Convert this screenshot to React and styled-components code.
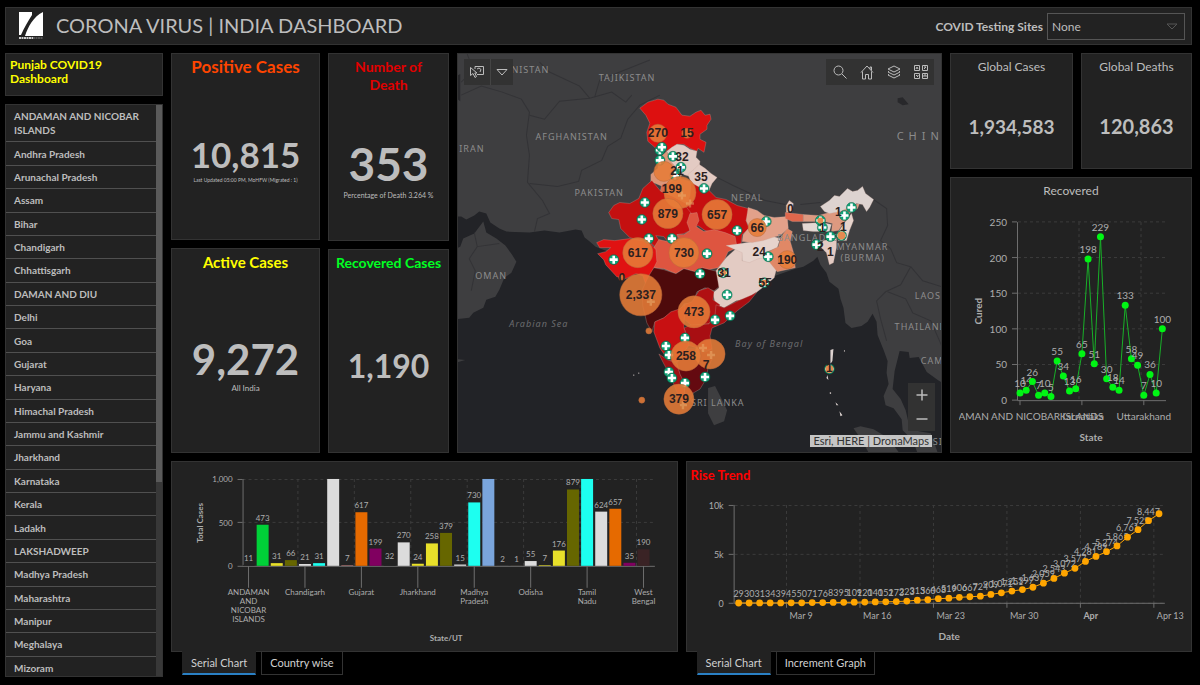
import React, { useState } from "react";
import styled, { createGlobalStyle } from "styled-components";

const GlobalStyle = createGlobalStyle`
    * {
        box-sizing: border-box;
    }
    body {
        margin: 0;
        background: #000;
        color: #bdbdbd;
        font-family: Lato, "Liberation Sans", sans-serif;
    }
    button, select {
        font-family: inherit;
    }
`

const Page = styled.div`
    display: flex;
    flex-direction: column;
    gap: 8px;
    height: 100vh;
    min-height: 600px;
    padding: 7px 8px 8px 5px;
`

const Panel = styled.section`
    background: #222;
    border: 1px solid #333;
    min-width: 0;
    min-height: 0;
    overflow: hidden;
`

const Header = styled.header`
    display: flex;
    align-items: center;
    flex: none;
    height: 38px;
    padding: 0 6px 0 13px;
    background: #222;
    border: 1px solid #333;
`

const Title = styled.h1`
    flex: 1;
    margin: 0 0 2px 13px;
    font-size: 20px;
    font-weight: 400;
    white-space: nowrap;
`

const SiteLabel = styled.label`
    margin-right: 4px;
    font-size: 12px;
    font-weight: 700;
`

const SelectBox = styled.div`
    position: relative;
    width: 138px;

    svg {
        position: absolute;
        top: 10px;
        right: 7px;
        pointer-events: none;
    }
`

const Select = styled.select`
    appearance: none;
    width: 100%;
    height: 27px;
    padding: 0 4px;
    color: #bdbdbd;
    background: #222;
    border: 1px solid #555;
    border-radius: 0;
    font-size: 12px;
`

const Body = styled.main`
    display: grid;
    grid-template-columns: 158fr 1021fr;
    gap: 8px;
    flex: 1;
    min-height: 0;
`

const Column = styled.div`
    display: flex;
    flex-direction: column;
    gap: 8px;
    min-width: 0;
    min-height: 0;
`

const LinkPanel = styled(Panel)`
    flex: none;
    height: 43px;
    padding: 4px;
`

const PunjabLink = styled.a`
    display: block;
    color: #ff0;
    font-size: 12px;
    font-weight: 700;
    line-height: 14px;
    text-decoration: none;
`

const ListPanel = styled(Panel)`
    display: flex;
    flex: 1;
`

const ListScroll = styled.div`
    flex: 1;
    overflow: auto;
    scrollbar-width: none;
`

const StateList = styled.ul`
    display: flex;
    flex-direction: column;
    height: calc(100% + 4px);
    margin: 0;
    padding: 0;
    list-style: none;
`

const StateRow = styled.li`
    flex: 1 0 auto;
    display: flex;
    align-items: center;
    padding: 4px 8px;
    border-bottom: 1px solid #505050;
    font-size: 10px;
    font-weight: 700;
    line-height: 14px;
`

const ScrollTrack = styled.div`
    width: 6px;
    background: #383838;
`

const ScrollThumb = styled.div`
    height: 66%;
    background: #5a5a5a;
`

const Content = styled.div`
    display: grid;
    grid-template-rows: 399fr 215fr;
    gap: 8px;
    min-width: 0;
    min-height: 0;
`

const TopRow = styled.div`
    display: grid;
    grid-template-columns: 149fr 121fr 485fr 242fr;
    gap: 8px;
    min-height: 0;
`

const BottomRow = styled.div`
    display: grid;
    grid-template-columns: 1fr 1fr;
    gap: 8px;
    min-height: 0;
    padding-bottom: 2px;
`

const GlobalRow = styled.div`
    display: grid;
    grid-template-columns: 123fr 111fr;
    gap: 8px;
    height: 116px;
    flex: none;
`

const MetricPanel = styled(Panel)`
    display: flex;
    flex-direction: column;
    flex: ${props => props.$grow || 1};
    padding: 4px;
    text-align: center;
`

const MetricTitle = styled.h2`
    margin: 0;
    color: ${props => props.$color || '#bdbdbd'};
    font-size: ${props => props.$size || 12}px;
    font-weight: ${props => props.$color ? 700 : 400};
    line-height: 18px;
`

const MetricBody = styled.div`
    display: flex;
    flex-direction: column;
    align-items: center;
    justify-content: center;
    gap: 2px;
    flex: 1;
    padding-top: 12px;
`

const MetricValue = styled.span`
    font-size: ${props => props.$size}px;
    font-weight: 700;
    line-height: 1;
`

const MetricNote = styled.span`
    font-size: ${props => props.$size}px;
    line-height: 12px;
    white-space: nowrap;
`

const ChartPanel = styled(Panel)`
    display: flex;
    flex-direction: column;
    position: relative;
    flex: 1;
`

const ChartTitle = styled.h2`
    margin: 0;
    padding-top: 4px;
    font-size: 12px;
    font-weight: 400;
    line-height: 18px;
    text-align: center;
`

const TrendTitle = styled(ChartTitle)`
    padding-left: 4px;
    color: #f00;
    font-size: 13px;
    font-weight: 700;
    text-align: left;
`

const ChartSvg = styled.svg`
    display: block;
    flex: 1;
    width: 100%;
    min-height: 0;
    fill: #adadad;
    font-size: ${props => props.$size || 9}px;

    .axis {
        stroke: #6e6e6e;
        fill: none;
    }
    .grid {
        stroke: #3c3c3c;
        stroke-dasharray: 3 3;
        fill: none;
    }
    .name {
        font-weight: 700;
        text-anchor: middle;
    }
    .mid {
        text-anchor: middle;
    }
    .end {
        text-anchor: end;
    }
`

const Tabbed = styled.div`
    display: flex;
    flex-direction: column;
    min-width: 0;
    min-height: 0;
`

const Tabs = styled.div`
    display: flex;
    gap: 5px;
    flex: none;
    height: 24px;
    margin-top: -1px;
    padding-left: 11px;
    z-index: 1;
`

const Tab = styled.button`
    height: 24px;
    padding: 0 8px;
    color: #d0d0d0;
    background: ${props => props.$active ? '#222' : '#000'};
    border: 1px solid ${props => props.$active ? '#222' : '#333'};
    border-bottom: ${props => props.$active ? '2px solid #2a80c4' : '1px solid #333'};
    font-size: 11px;
    cursor: pointer;
`

const MapPanel = styled(Panel)`
    position: relative;
    background: #3e3e40;
`

const MapSvg = styled.svg`
    display: block;
    width: 100%;
    height: 100%;

    .place {
        fill: #8c8c8c;
        font: 9px "Noto Sans", sans-serif;
        letter-spacing: 1px;
    }
    .sea {
        fill: #6b6b6e;
        font-style: italic;
    }
    .wide {
        font-size: 11px;
        letter-spacing: 5px;
    }
    .count {
        fill: #2c2020;
        font: bold 12px "Liberation Sans", sans-serif;
        text-anchor: middle;
    }
`

const MapTools = styled.div`
    position: absolute;
    display: flex;
    flex-direction: ${props => props.$column ? 'column' : 'row'};
    background: #323232;
    ${props => props.$place}
`

const MapButton = styled.button`
    display: flex;
    align-items: center;
    justify-content: center;
    width: ${props => props.$width || 27}px;
    height: ${props => props.$height || 26}px;
    padding: 0;
    color: #bcbcbc;
    background: none;
    border: 0;
    border-right: ${props => props.$divider ? '1px solid #444' : '0'};
    cursor: pointer;

    svg {
        fill: none;
        stroke: currentColor;
    }
`

const Attribution = styled.span`
    position: absolute;
    right: 9px;
    bottom: 5px;
    padding: 0 3px;
    color: #333;
    background: rgba(225, 225, 225, 0.85);
    font-size: 11px;
    line-height: 12px;
`

const states = [
    'ANDAMAN AND NICOBAR ISLANDS', 'Andhra Pradesh', 'Arunachal Pradesh', 'Assam', 'Bihar',
    'Chandigarh', 'Chhattisgarh', 'DAMAN AND DIU', 'Delhi', 'Goa', 'Gujarat', 'Haryana',
    'Himachal Pradesh', 'Jammu and Kashmir', 'Jharkhand', 'Karnataka', 'Kerala', 'Ladakh',
    'LAKSHADWEEP', 'Madhya Pradesh', 'Maharashtra', 'Manipur', 'Meghalaya', 'Mizoram'
]

const WHITE = '#dcdcdc', YELLOW = '#e8e02a', OLIVE = '#666600', CYAN = '#1dfff0', ORANGE = '#e66a00', PURPLE = '#800060'

const stateCases = [
    [11, '#222'], [473, '#00d138'], [31, YELLOW], [66, OLIVE], [21, WHITE], [31, CYAN], [1510, WHITE],
    [7, '#b87878'], [617, ORANGE], [199, PURPLE], [32, '#222'], [270, WHITE], [24, YELLOW], [258, YELLOW],
    [379, OLIVE], [15, WHITE], [730, CYAN], [2337, '#7aa5dc'], [2, '#555'], [1, '#a08060'], [55, WHITE],
    [7, YELLOW], [176, YELLOW], [879, OLIVE], [1173, CYAN], [624, WHITE], [657, ORANGE], [35, PURPLE], [190, '#3a2325']
]

const stateTicks = [
    ['ANDAMAN', 'AND', 'NICOBAR', 'ISLANDS'], ['Chandigarh'], ['Gujarat'], ['Jharkhand'],
    ['Madhya', 'Pradesh'], ['Odisha'], ['Tamil', 'Nadu'], ['West', 'Bengal']
]

const cured = [10, 14, 26, 7, 10, 5, 55, 34, 13, 16, 65, 198, 51, 229, 30, 18, 14, 133, 58, 49, 7, 36, 10, 100]

const trend = [
    29, 30, 31, 34, 39, 45, 50, 71, 76, 83, 95, 109, 120, 140, 152, 173, 223, 315, 360, 468, 519,
    606, 667, 724, 909, 1071, 1251, 1397, 1637, 2059, 2543, 3072, 3577, 4281, 4789, 5274, 5865,
    6761, 7529, 8447, 9152
]

// India, drawn state by state
const PALE = '#e3cbc3'
const regions = [
    ['#dd1010', '640,108 644,105 648,102 658,99 664,100 668,104 676,107 682,115 690,116 696,112 701,110 705,115 710,114 711,119 707,125 707,129 700,134 700,139 706,142 704,152 698,148 697,151 690,148 684,144 677,144 668,150 660,152 655,147 648,141 647,132 650,123 646,115'],
    [PALE, '667,151 672,147 677,144 684,145 690,149 697,151 696,157 700,161 699,167 690,176 680,173 672,166'],
    [PALE, '688,174 694,169 699,164 705,168 711,173 717,177 712,183 709,190 700,188 692,184'],
    ['#dc9678', '659,158 667,151 670,160 677,168 682,174 678,182 665,187 651,181 651,174 658,168'],
    ['#d9694c', '662,184 680,178 690,181 692,193 687,205 680,202 672,196 660,192'],
    ['#c41010', '652,180 643,188 639,198 630,203 620,202 614,205 609,212 612,218 619,219 621,228 630,237 641,240 650,241 655,246 660,241 656,235 664,236 667,240 672,245 679,241 677,234 684,233 690,230 690,215 694,210 686,203 673,196 661,191'],
    ['#c60e10', '691,182 700,187 709,190 716,197 726,199 737,205 748,208 749,214 746,220 749,228 742,234 741,243 736,246 731,240 722,234 712,232 705,230 698,225 692,229 688,222 693,215 686,206 690,195'],
    ['#de5540', '659,239 668,241 674,244 680,240 677,234 684,234 690,230 687,222 690,213 697,212 699,220 696,226 704,231 714,229 725,232 735,236 737,247 728,251 724,260 718,267 708,269 702,267 695,271 684,268 676,273 664,268 654,267 652,250'],
    ['#e01212', '597,242 604,239 615,240 630,238 641,240 650,242 656,249 657,261 653,269 651,282 646,284 643,275 636,273 626,278 617,276 606,264 604,259 598,253 606,251 611,247 600,247'],
    ['#4e0a0b', '649,275 654,267 664,269 676,273 684,268 695,271 702,267 714,270 719,271 719,286 714,290 705,287 697,291 693,302 684,303 679,311 671,312 664,317 655,321 652,331 647,322 643,305 642,290'],
    [PALE, '737,247 743,251 742,260 749,260 758,255 768,258 776,269 774,277 766,284 757,291 746,298 736,300 724,307 715,303 713,292 719,287 716,270 726,257'],
    ['#e6d3cc', '726,245 741,243 753,241 763,239 773,236 780,238 777,247 767,251 769,257 758,258 749,262 742,260 742,252 733,248'],
    ['#e2a18a', '748,207 757,210 764,215 774,217 787,216 788,228 780,235 772,237 763,240 752,242 742,241 743,234 749,227 746,220'],
    ['#e08866', '787,228 792,231 790,241 793,251 795,267 786,269 777,271 768,260 768,251 778,246 781,236'],
    [PALE, '786,205 789,200 793,203 792,211 786,212'],
    ['#e0674c', '785,212 794,213 803,214 803,221 792,221 785,218'],
    ['#dd9980', '803,214 818,215 829,212 840,211 848,206 859,203 857,208 849,213 844,221 838,230 831,231 832,223 824,221 803,221'],
    ['#ddd3d0', '820,206 829,200 834,195 839,196 842,193 847,188 852,191 857,190 862,186 865,193 873,199 869,207 866,211 862,204 856,203 848,207 840,211 829,213 824,211'],
    ['#e3d8d4', '802,223 822,222 831,224 829,231 813,231 803,230'],
    ['#e6d3cc', '845,221 851,213 853,220 849,230 846,240 838,240 836,234'],
    [PALE, '823,240 836,238 836,247 833,262 829,264 826,252 820,246'],
    ['#b01012', '699,290 708,287 714,291 713,299 720,304 715,314 709,323 692,325 684,318 684,304 692,301'],
    ['#a80e12', '716,304 724,307 738,300 752,294 757,291 749,301 737,310 724,322 712,327 710,335 712,348 703,350 697,347 688,344 687,335 684,327 691,324 709,323 715,314'],
    ['#c81012', '655,321 664,317 671,311 680,308 685,304 684,327 687,336 689,344 684,352 677,361 668,359 660,347 654,331'],
    ['#a01014', '659,353 668,359 677,362 681,374 685,383 684,402 677,391 671,376 663,361'],
    ['#640a10', '686,348 697,348 705,351 712,348 712,358 708,367 706,378 700,388 693,392 690,400 684,403 685,383 680,373 677,362']
]

const bubbles = [
    [658, 133, 9, '270'], [687, 133, 5, '15'], [664, 171, 10], [680, 192, 16], [668, 213, 15, '879'], [717, 214, 15, '657'],
    [757, 227, 9, '66'], [638, 252, 15, '617'], [684, 252, 15, '730'], [641, 294, 21, '2,337'], [694, 311, 16, '473'],
    [710, 353, 15], [686, 355, 15, '258'], [679, 398, 15, '379'], [787, 259, 9, '190'], [622, 277, 3], [649, 330, 3], [642, 399, 3]
]

const labels = [
    [682, 157, '32'], [677, 171, '21'], [701, 177, '35'], [672, 189, '199'], [790, 208, '0'], [838, 211, '1'],
    [822, 227, '1'], [843, 226, '1'], [759, 251, '24'], [820, 246, '2'], [830, 251, '1'], [724, 272, '31'],
    [765, 282, '55'], [622, 277, '0'], [706, 364, '7'], [829, 367, '1']
]

const clinics = [
    [660, 150], [662, 147], [660, 160], [673, 156], [681, 167], [675, 175], [704, 188], [645, 202], [642, 219], [649, 238],
    [672, 238], [614, 259], [700, 273], [707, 253], [737, 230], [766, 221], [768, 256], [723, 272], [727, 294],
    [715, 319], [730, 315], [685, 337], [666, 345], [669, 354], [669, 371], [672, 377], [685, 382], [705, 376],
    [820, 220], [822, 227], [844, 215], [851, 207], [830, 236], [841, 235], [816, 244], [829, 368], [764, 282]
]

const places = [
    [512, 73, 'NISTAN'], [599, 81, 'TAJIKISTAN'], [536, 140, 'AFGHANISTAN'], [460, 152, 'IRAN'], [575, 196, 'PAKISTAN'],
    [731, 201, 'NEPAL'], [777, 240, 'BANGLADESH'], [836, 249, 'MYANMAR'], [840, 260, '(BURMA)'], [914, 298, 'LAOS'],
    [894, 329, 'THAILAND'], [920, 363, 'CAM'], [691, 405, 'SRI LANKA'], [476, 278, 'OMAN'], [932, 444, 'SI']
]

const IndiaMap = () => (
    <MapSvg viewBox="458 54 483 397" preserveAspectRatio="xMidYMid slice" role="img" aria-label="Cases by state">
        <path fill="#222327" d="M450 216 L462 216 L467 219 L475 215 L480 211 L487 213 L491 222 L500 228 L507 231 L530 232 L545 230 L560 232 L576 229 L582 230 L585 237 L590 241 L596 246 L606 250 L660 275 L700 330 L720 322 L757 291 L775 275 L795 268 L803 266 L813 260 L817 256 L820 264 L826 272 L829 281 L838 288 L840 298 L843 307 L845 322 L851 327 L861 325 L867 321 L872 313 L876 321 L877 334 L883 349 L887 360 L886 372 L888 383 L883 395 L885 404 L893 407 L901 418 L902 429 L912 439 L920 460 L940 460 L930 432 L918 430 L908 422 L905 409 L900 398 L892 388 L894 370 L899 350 L908 351 L909 357 L918 356 L926 371 L937 379 L945 384 L945 460 L450 460 Z" />
        <path fill="#3e3e40" d="M450 252 L461 246 L464 238 L475 233 L484 221 L487 232 L497 238 L506 245 L512 253 L517 261 L512 272 L505 277 L500 289 L496 296 L487 299 L484 307 L474 312 L470 317 L450 319 Z M708 387 L715 385 L720 395 L727 409 L724 420 L714 424 L708 412 Z M853 427 L860 425 L873 428 L888 437 L901 455 L870 455 L862 440 Z M457 358 L466 359 L459 361 Z" />
        <path fill="#28282b" d="M897 98 L902 97 L908 104 L902 105 L897 102 Z M457 76 L461 74 L461 101 L457 98 Z" />
        <g fill="none" stroke="#333336">
            <path d="M462 95 L482 86 L503 92 L522 99 L530 112 L527 135 L530 155 L528 182 L543 200 L550 213 L538 218 L535 231" />
            <path d="M530 183 L558 186 L579 181 L582 170 L602 160 L608 146 L621 138 L628 119 L640 105 L660 95" />
            <path d="M530 115 L545 119 L560 101 L590 98 L612 92 L626 102 L632 95" />
            <path d="M540 62 L550 72 L580 86 L590 98 M595 97 L600 80 L620 72 L650 60" />
            <path d="M717 177 L733 185 L748 192 L765 200 L785 204 M800 204 L820 202 M873 199 L886 208 L887 225 L880 240 L890 248" />
            <path d="M468 54 L474 70 L462 82 M475 232 L478 246 L470 258 L476 270 L472 290 M478 246 L500 243" />
            <path d="M890 248 L896 262 L910 266 L900 284 L885 291 L876 300 L880 318 L886 340 M910 266 L922 280 L941 286 M887 291 L905 298 L912 312 L930 320 L941 345" />
        </g>
        {regions.map(([color, points], index) => (
            <polygon key={index} points={points} fill={color} stroke="#c9a79f" strokeWidth="0.3" />
        ))}
        <g className="place">
            {places.map(([x, y, name]) => <text key={name} x={x} y={y}>{name}</text>)}
            <text className="wide place" x="896" y="140">CHIN</text>
            <text className="sea place" x="510" y="326">Arabian Sea</text>
            <text className="sea place" x="735" y="346">Bay of Bengal</text>
        </g>
        <g fill="#ddd3d0">
            <path d="M830 349 L833 348 L832 360 L830 363 Z M827 374 L828 379 L826 377 Z M835 401 L838 404 L836 404 Z M839 410 L842 414 L840 415 Z" />
            <circle cx="844" cy="350" r="0.6" /><circle cx="830" cy="392" r="0.8" />
            <circle cx="634" cy="374" r="0.6" /><circle cx="639" cy="372" r="0.6" />
        </g>
        {clinics.map(([x, y], index) => (
            <g key={index}>
                <circle cx={x} cy={y} r="5" fill="#12a277" stroke="#075c42" strokeWidth="0.5" />
                <path d={`M${x - 4} ${y} h8 M${x} ${y - 4} v8`} stroke="#fff" strokeWidth="2.6" />
            </g>
        ))}
        {bubbles.map(([x, y, r], index) => (
            <circle key={index} cx={x} cy={y} r={r} fill="#e67c38" fillOpacity="0.88" stroke="#b8683a" strokeWidth="0.5" />
        ))}
        <g stroke="#e9b070" strokeWidth="2.4" opacity="0.5">
            <path d="M678 195 h8 M682 191 v8 M686 203 h8 M690 199 v8 M699 347 h8 M703 343 v8 M707 354 h8 M711 350 v8 M647 301 h8 M651 297 v8 M680 404 h7 M683 400 v8" />
        </g>
        <g fill="#e58a50">
            <circle cx="723" cy="272" r="3" /><circle cx="764" cy="282" r="3" /><circle cx="820" cy="220" r="3" />
            <circle cx="841" cy="235" r="4" /><circle cx="829" cy="368" r="4" />
        </g>
        <g className="count">
            {bubbles.filter(b => b[3]).map(([x, y, r, text]) => <text key={text} x={x} y={y + 4}>{text}</text>)}
            {labels.map(([x, y, text], index) => <text key={index} x={x} y={y + 4}>{text}</text>)}
        </g>
    </MapSvg>
)

const CasesChart = () => {
    const x = index => 76 + index * 14.13
    const y = value => 104 - Math.min(value, 1000) * 0.087
    return (
        <ChartSvg viewBox="0 0 504 189" $size={8} role="img" aria-label="Total cases by state">
            <path className="grid" d="M70 17.5 H483 M70 60.5 H483" />
            {stateTicks.map((lines, index) => (
                <g key={index}>
                    {index > 0 && <path className="grid" d={`M${x(index * 4 - 0.5)} 17 V104`} />}
                    <path className="axis" d={`M${x(index * 4)} 104 V126`} />
                    {lines.map((line, n) => <text key={line} className="mid" x={x(index * 4)} y={133 + n * 9}>{line}</text>)}
                </g>
            ))}
            <path className="axis" d="M70.5 17 V104.5 M65 17.5 H70 M65 60.5 H70 M65 104.5 H483" />
            <text className="end" x="60" y="20">1,000</text>
            <text className="end" x="60" y="64">500</text>
            <text className="end" x="60" y="107">0</text>
            {stateCases.map(([value, color], index) => (
                <g key={index}>
                    <rect x={x(index) - 6} y={y(value)} width="12" height={104 - y(value)} fill={color} />
                    {value < 1000 && <text className="mid" x={x(index)} y={y(value) - 4}>{value}</text>}
                </g>
            ))}
            <text className="name" transform="translate(30 61) rotate(-90)">Total Cases</text>
            <text className="name" x="274" y="179">State/UT</text>
        </ChartSvg>
    )
}

const RecoveredChart = () => {
    const x = index => 69 + index * 6.19
    const y = value => 199 - value * 0.713
    return (
        <ChartSvg viewBox="0 0 240 250" $size={10} role="img" aria-label="Cured by state">
            {[0, 50, 100, 150, 200, 250].map(value => (
                <g key={value}>
                    {value > 0 && <path className="grid" d={`M67 ${y(value)} H216`} />}
                    <path className="axis" d={`M61 ${y(value)} H66`} />
                    <text className="end" x="56" y={y(value) + 4}>{value}</text>
                </g>
            ))}
            <path className="grid" d="M128 21 V199 M190 21 V199" />
            <path className="axis" d={`M66.5 21 V199.5 H215 M${x(0)} 199 v5 M${x(10)} 199 v5 M${x(20)} 199 v5`} />
            <polyline points={cured.map((value, index) => `${x(index)},${y(value)}`).join(' ')} fill="none" stroke="#18b028" />
            {cured.map((value, index) => (
                <g key={index}>
                    <circle cx={x(index)} cy={y(value)} r="3.5" fill="#00f514" />
                    <text className="mid" x={x(index)} y={y(value) - 6}>{value}</text>
                </g>
            ))}
            <svg x="8" y="205" width="224" height="20" viewBox="8 205 224 20">
                <text className="mid" x={x(0)} y="219">ANDAMAN AND NICOBAR ISLANDS</text>
                <text className="mid" x={x(10)} y="219">Karnataka</text>
                <text className="mid" x={x(20)} y="219">Uttarakhand</text>
            </svg>
            <text className="name" transform="translate(31 110) rotate(-90)">Cured</text>
            <text className="name" x="140" y="240">State</text>
        </ChartSvg>
    )
}

const TrendChart = () => {
    const x = index => 51 + index * 10.53
    const y = value => 119.5 - value * 0.0098
    return (
        <ChartSvg viewBox="0 0 504 167" $size={9} role="img" aria-label="Rise of cases by date">
            {['10k', '5k', '0'].map((label, index) => (
                <g key={label}>
                    <path className="grid" d={`M47 ${21.5 + index * 49} H478`} />
                    <path className="axis" d={`M41 ${21.5 + index * 49} H46`} />
                    <text className="end" x="36" y={25 + index * 49}>{label}</text>
                </g>
            ))}
            {['Mar 9', 'Mar 16', 'Mar 23', 'Mar 30', 'Apr', 'Apr 13'].map((label, index) => (
                <g key={label}>
                    <path className="grid" d={`M${99 + index * 73.6} 21 V119`} />
                    <path className="axis" d={`M${99 + index * 73.6} 119 v5`} />
                    <text x={102 + index * 73.6} y="135" fontWeight={label === 'Apr' ? 700 : 400}>{label}</text>
                </g>
            ))}
            <path className="axis" d="M46.5 21 V119.5 H478" />
            {trend.slice(0, -1).map((value, index) => (
                <text key={index} className="mid" x={x(index)} y={y(value) - 6}>{value.toLocaleString('en-US')}</text>
            ))}
            <polyline points={trend.map((value, index) => `${x(index)},${y(value)}`).join(' ')} fill="none" stroke="#ffa500" />
            {trend.map((value, index) => (
                <circle key={index} cx={x(index)} cy={y(value)} r="3.4" fill="#ffa500" />
            ))}
            <text className="name" fontSize="10" x="262" y="156">Date</text>
        </ChartSvg>
    )
}

const Metric = ({ title, value, note, color, size, valueSize, noteSize, grow }) => (
    <MetricPanel $grow={grow}>
        <MetricTitle $color={color} $size={size}>{title}</MetricTitle>
        <MetricBody>
            <MetricValue $size={valueSize}>{value}</MetricValue>
            {note && <MetricNote $size={noteSize}>{note}</MetricNote>}
        </MetricBody>
    </MetricPanel>
)

const TabBar = ({ names }) => {
    const [active, setActive] = useState(names[0])
    return (
        <Tabs role="tablist">
            {names.map(name => (
                <Tab key={name} role="tab" aria-selected={name === active} $active={name === active} onClick={() => setActive(name)}>
                    {name}
                </Tab>
            ))}
        </Tabs>
    )
}

const App = () => {
    return (
        <Page>
            <GlobalStyle />
            <Header>
                <svg width="24" height="28" viewBox="0 0 24 28" aria-hidden="true">
                    <path fill="#fff" d="M0 0 H13 V3 C9 9 5 16 2 23 H0 Z M24 0 V24 H6 C9 15 14 5 24 0 Z" />
                    <path stroke="#ccc" strokeWidth="2" d="M0 26 H14" strokeDasharray="2 0.5" />
                    <path stroke="#555" strokeWidth="2" d="M14 26 H24" strokeDasharray="2 0.5" />
                </svg>
                <Title>CORONA VIRUS | INDIA DASHBOARD</Title>
                <SiteLabel htmlFor="sites">COVID Testing Sites</SiteLabel>
                <SelectBox>
                    <Select id="sites"><option>None</option></Select>
                    <svg width="12" height="7" viewBox="0 0 12 7" fill="none" stroke="#555">
                        <path d="M1 1 H11 L6 6 Z" />
                    </svg>
                </SelectBox>
            </Header>
            <Body>
                <Column>
                    <LinkPanel>
                        <PunjabLink href="#punjab">Punjab COVID19 Dashboard</PunjabLink>
                    </LinkPanel>
                    <ListPanel>
                        <ListScroll>
                            <StateList>
                                {states.map(state => <StateRow key={state}>{state}</StateRow>)}
                            </StateList>
                        </ListScroll>
                        <ScrollTrack><ScrollThumb /></ScrollTrack>
                    </ListPanel>
                </Column>
                <Content>
                    <TopRow>
                        <Column>
                            <Metric title="Positive Cases" value="10,815" note="Last Updated 05:00 PM, MoHFW (Migrated : 1)"
                                color="#ff4500" size={17} valueSize={35} noteSize={5} grow="186" />
                            <Metric title="Active Cases" value="9,272" note="All India" color="#ff0" size={15} valueSize={42} noteSize={8} grow="205" />
                        </Column>
                        <Column>
                            <Metric title={<>Number of<br />Death</>} value="353" note="Percentage of Death 3.264 %"
                                color="#e00000" size={14} valueSize={46} noteSize={7} grow="187" />
                            <Metric title="Recovered Cases" value="1,190" color="#0f2" size={14} valueSize={32} grow="204" />
                        </Column>
                        <MapPanel>
                            <IndiaMap />
                            <MapTools $place="top: 5px; left: 6px;">
                                <MapButton aria-label="Select" $divider>
                                    <svg width="16" height="14" viewBox="0 0 16 14">
                                        <path d="M6 4 V1.5 H14.5 V9.5 H8 M1.5 2.5 V10.5 L4 8.5 L6 12.5 L7.5 11.5 L5.8 8 H8 Z M8 4 L10 3 L12 4.5 L11 7" />
                                    </svg>
                                </MapButton>
                                <MapButton aria-label="Select options" $width={22}>
                                    <svg width="12" height="8" viewBox="0 0 12 8"><path d="M1 1.5 H11 L6 7 Z" /></svg>
                                </MapButton>
                            </MapTools>
                            <MapTools $place="top: 5px; right: 7px;">
                                <MapButton aria-label="Search">
                                    <svg width="14" height="14" viewBox="0 0 14 14"><circle cx="5.5" cy="5.5" r="4.5" /><path d="M9 9 L13.5 13.5" /></svg>
                                </MapButton>
                                <MapButton aria-label="Home">
                                    <svg width="14" height="15" viewBox="0 0 14 15">
                                        <path d="M1 7.5 L7 1 L13 7.5 M2.5 6.5 V14 H5.5 V9.5 H8.5 V14 H11.5 V6.5 M11.5 5.5 V2 H10 V4" />
                                    </svg>
                                </MapButton>
                                <MapButton aria-label="Layers">
                                    <svg width="14" height="14" viewBox="0 0 14 14">
                                        <path d="M7 1 L13 4 L7 7 L1 4 Z M2 6.2 L1 7 L7 10 L13 7 L12 6.2 M2 9.2 L1 10 L7 13 L13 10 L12 9.2" />
                                    </svg>
                                </MapButton>
                                <MapButton aria-label="Basemaps">
                                    <svg width="14" height="14" viewBox="0 0 14 14">
                                        <path d="M.5 .5 H5.5 V5.5 H.5 Z M8.5 .5 H13.5 V5.5 H8.5 Z M.5 8.5 H5.5 V13.5 H.5 Z M8.5 8.5 H13.5 V13.5 H8.5 Z" />
                                        <path d="M2 4 L3 2 L4 4 M10 2 H12 L10 4 M2 10 L4 12 M4 10 V11 M10 12 V10 H12 V12" />
                                    </svg>
                                </MapButton>
                            </MapTools>
                            <MapTools $column $place="right: 6px; bottom: 21px;">
                                <MapButton aria-label="Zoom in" $height={24}>
                                    <svg width="12" height="12" viewBox="0 0 12 12" strokeWidth="1.5"><path d="M0.5 6 H11.5 M6 0.5 V11.5" /></svg>
                                </MapButton>
                                <MapButton aria-label="Zoom out" $height={24}>
                                    <svg width="12" height="12" viewBox="0 0 12 12" strokeWidth="1.5"><path d="M0.5 6 H11.5" /></svg>
                                </MapButton>
                            </MapTools>
                            <Attribution>Esri, HERE | DronaMaps</Attribution>
                        </MapPanel>
                        <Column>
                            <GlobalRow>
                                <Metric title="Global Cases" value="1,934,583" valueSize={19} />
                                <Metric title="Global Deaths" value="120,863" valueSize={20} />
                            </GlobalRow>
                            <ChartPanel>
                                <ChartTitle>Recovered</ChartTitle>
                                <RecoveredChart />
                            </ChartPanel>
                        </Column>
                    </TopRow>
                    <BottomRow>
                        <Tabbed>
                            <ChartPanel>
                                <CasesChart />
                            </ChartPanel>
                            <TabBar names={['Serial Chart', 'Country wise']} />
                        </Tabbed>
                        <Tabbed>
                            <ChartPanel>
                                <TrendTitle>Rise Trend</TrendTitle>
                                <TrendChart />
                            </ChartPanel>
                            <TabBar names={['Serial Chart', 'Increment Graph']} />
                        </Tabbed>
                    </BottomRow>
                </Content>
            </Body>
        </Page>
    )
}

export default App;
